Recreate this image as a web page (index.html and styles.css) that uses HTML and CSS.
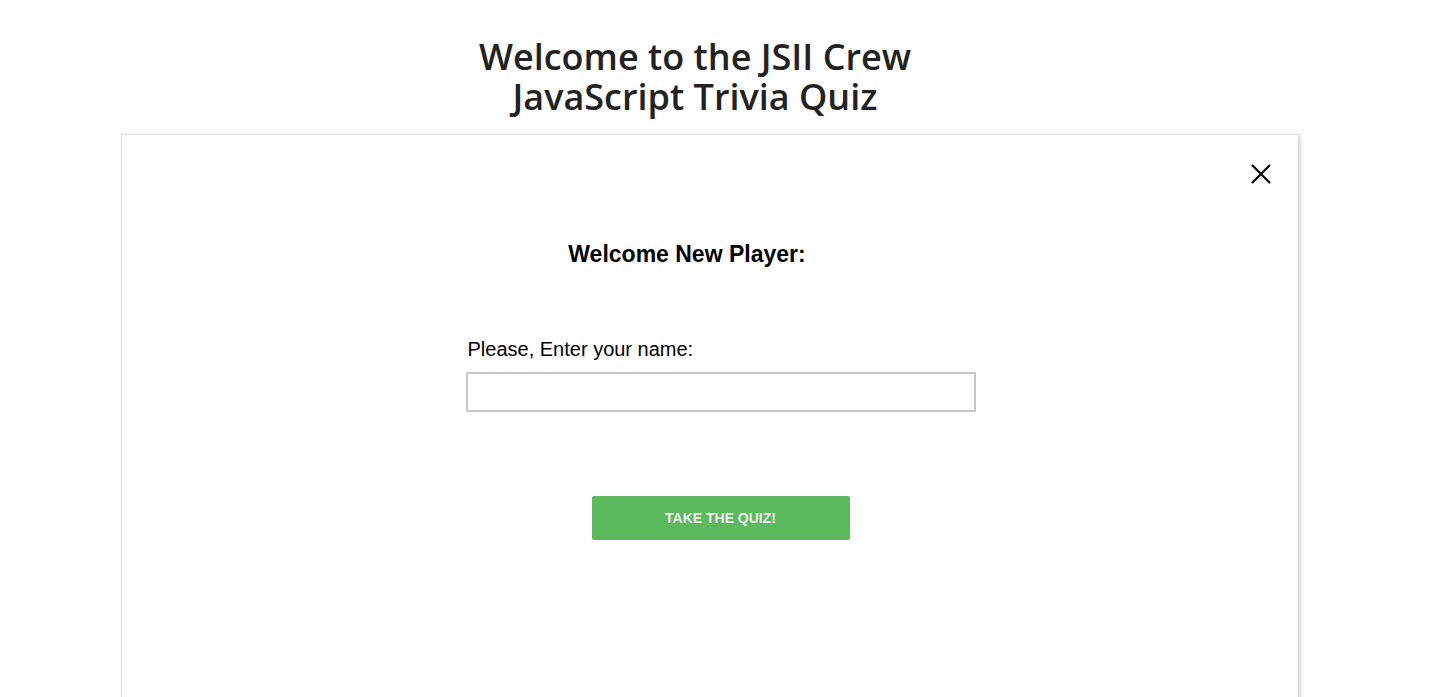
FILE: index.html
```html
<!DOCTYPE html>
<html>
<head>
<meta charset="utf-8">
<link rel="stylesheet" href="styles.css">
</head>
<body>
<header class="page-title">
  <h1>Welcome to the JSII Crew<br>JavaScript Trivia Quiz</h1>
</header>
<main class="modal">
  <div class="modal-top">
    <button class="close" aria-label="Close">
      <svg width="20" height="20" viewBox="0 0 20 20"><path d="M1 1 L19 19 M19 1 L1 19" stroke="#000" stroke-width="2.2" fill="none"/></svg>
    </button>
  </div>
  <h2 class="modal-heading">Welcome New Player:</h2>
  <form class="player-form">
    <label class="name-label" for="name">Please, Enter your name:</label>
    <input id="name" class="name-input" type="text">
    <button type="button" class="start-btn">TAKE THE QUIZ!</button>
  </form>
</main>
</body>
</html>
```
FILE: styles.css
```css
html, body {
  margin: 0;
  padding: 0;
  background: #fff;
}
body {
  font-family: "Liberation Sans", Arial, sans-serif;
  overflow: hidden;
}
.page-title {
  display: flex;
  justify-content: center;
  padding-top: 37px;
  padding-right: 50px;
}
.page-title h1 {
  margin: 0;
  font-family: "Open Sans", sans-serif;
  font-weight: 600;
  font-size: 36px;
  line-height: 40px;
  color: #222;
  text-align: center;
}
.modal {
  margin: 17px 0 0 121px;
  width: 1178px;
  height: 700px;
  border: 1px solid #ddd;
  box-shadow: 2px 1px 3px rgba(0,0,0,0.15);
  box-sizing: border-box;
}
.modal-top {
  display: flex;
  justify-content: flex-end;
  padding: 29px 27px 0 0;
}
.close {
  border: 0;
  background: none;
  padding: 0;
  width: 20px;
  height: 20px;
  cursor: pointer;
}
.close svg { display: block; }
.modal-heading {
  margin: 57px 0 0 0;
  text-align: center;
  font-size: 23px;
  font-weight: bold;
  color: #000;
  padding-right: 46px;
}
.player-form {
  display: flex;
  flex-direction: column;
  align-items: center;
  margin-top: 70px;
  padding-left: 21px;
}
.name-label {
  width: 510px;
  font-size: 20px;
  color: #000;
  padding-left: 2px;
  box-sizing: border-box;
  line-height: 22px;
}
.name-input {
  margin-top: 12px;
  width: 510px;
  height: 40px;
  border: 2px solid #c8c8c8;
  box-sizing: border-box;
  outline: none;
}
.start-btn {
  margin-top: 84px;
  width: 258px;
  height: 44px;
  background: #5cb85c;
  border: 0;
  border-radius: 2px;
  color: #f0f0f0;
  font-family: "Liberation Sans", Arial, sans-serif;
  font-weight: bold;
  font-size: 14px;
  cursor: pointer;
}
```
